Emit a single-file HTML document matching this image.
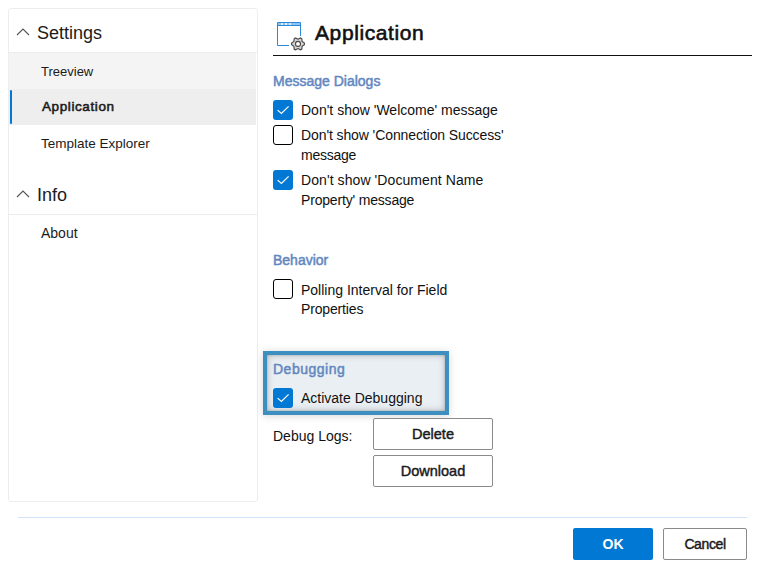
<!DOCTYPE html>
<html><head><meta charset="utf-8">
<style>
html,body{margin:0;padding:0;width:763px;height:567px;overflow:hidden;background:#fff;}
body{position:relative;font-family:"Liberation Sans",sans-serif;color:#1b1b1b;}
.a{position:absolute;white-space:nowrap;line-height:20px;}
#side{position:absolute;left:8px;top:8px;width:248px;height:492px;border:1px solid #ededed;border-radius:3px;}
.hdr{font-size:18px;color:#1b1b1b;}
.itm{font-size:13.5px;color:#1b1b1b;}
.sec{font-size:14px;color:#6287bf;-webkit-text-stroke:0.5px #6287bf;}
.lbl{font-size:14px;color:#111;}
.cb{position:absolute;left:273px;width:20px;height:20px;box-sizing:border-box;border-radius:3px;}
.cb.on{background:#0078d4;}
.cb.off{border:1px solid #000;background:#fff;}
.btn{position:absolute;box-sizing:border-box;border:1px solid #8a8a8a;border-radius:2px;background:#fff;}
.bt{font-size:14.5px;color:#1b1b1b;-webkit-text-stroke:0.45px #1b1b1b;}
</style></head><body>

<div id="side"></div>
<!-- settings header -->
<div style="position:absolute;left:9px;top:52px;width:248px;height:1px;background:#ececec"></div>
<div style="position:absolute;left:9px;top:53px;width:247px;height:36px;background:#f4f4f4"></div>
<div style="position:absolute;left:9px;top:89px;width:247px;height:36px;background:#eeeeee"></div>
<div style="position:absolute;left:10px;top:90px;width:2px;height:34px;background:#0078d4;border-radius:1px"></div>
<div style="position:absolute;left:9px;top:214px;width:248px;height:1px;background:#ececec"></div>

<svg style="position:absolute;left:0;top:0" width="40" height="220">
 <polyline points="17,35 23,29 29,35" fill="none" stroke="#575757" stroke-width="1.15"/>
 <polyline points="17,197 23,191 29,197" fill="none" stroke="#575757" stroke-width="1.15"/>
</svg>
<div class="a hdr" style="left:37px;top:23px">Settings</div>
<div class="a itm" style="left:41px;top:62px;font-size:13px">Treeview</div>
<div class="a itm" style="left:42px;top:97px;-webkit-text-stroke:0.55px #1b1b1b;letter-spacing:0.6px">Application</div>
<div class="a itm" style="left:41px;top:134px">Template Explorer</div>
<div class="a hdr" style="left:37px;top:185px">Info</div>
<div class="a itm" style="left:41px;top:223px;font-size:14px">About</div>

<!-- right header -->
<svg style="position:absolute;left:270px;top:15px" width="40" height="40" viewBox="270 15 40 40">
 <rect x="277.5" y="22.5" width="23" height="3" fill="#8ec5f0"/>
 <circle cx="282" cy="24" r="0.9" fill="#fff"/>
 <circle cx="286" cy="24" r="0.9" fill="#fff"/>
 <circle cx="290" cy="24" r="0.9" fill="#fff"/>
 <polyline points="289,45.5 277.5,45.5 277.5,22.5 300.5,22.5 300.5,36" fill="none" stroke="#2b88d8" stroke-width="1"/>
 <line x1="277.5" y1="25.5" x2="300.5" y2="25.5" stroke="#2b88d8" stroke-width="1"/>
 <g transform="translate(298,43.9)">
  <polygon points="6.40,-0.79 6.40,0.79 4.07,2.35 3.88,5.15 2.52,5.94 0.00,4.70 -2.52,5.94 -3.88,5.15 -4.07,2.35 -6.40,0.79 -6.40,-0.79 -4.07,-2.35 -3.88,-5.15 -2.52,-5.94 -0.00,-4.70 2.52,-5.94 3.88,-5.15 4.07,-2.35" fill="#d4d4d4" stroke="#454545" stroke-width="1.1" stroke-linejoin="miter"/>
  <circle r="2.5" fill="#fff" stroke="#454545" stroke-width="1.1"/>
 </g>
</svg>
<div class="a" style="left:315px;top:23px;font-size:21px;color:#111;-webkit-text-stroke:0.6px #111;letter-spacing:0.6px">Application</div>
<div style="position:absolute;left:273px;top:55px;width:479px;height:1px;background:#111"></div>

<div class="a sec" style="left:273px;top:71px">Message Dialogs</div>
<div class="cb on" style="top:100px"><svg width="20" height="20"><polyline points="4.6,10.1 8.4,13.5 15.6,6.3" fill="none" stroke="#fff" stroke-width="1.2"/></svg></div>
<div class="a lbl" style="left:301px;top:100px">Don't show 'Welcome' message</div>
<div class="cb off" style="top:125px"></div>
<div class="a lbl" style="left:301px;top:125px"><span style="letter-spacing:-0.1px">Don't show 'Connection Success'</span><br><span style="letter-spacing:-0.25px">message</span></div>
<div class="cb on" style="top:170px"><svg width="20" height="20"><polyline points="4.6,10.1 8.4,13.5 15.6,6.3" fill="none" stroke="#fff" stroke-width="1.2"/></svg></div>
<div class="a lbl" style="left:301px;top:170px"><span style="letter-spacing:0.08px">Don't show 'Document Name</span><br><span style="letter-spacing:-0.18px">Property' message</span></div>

<div class="a sec" style="left:273px;top:250px">Behavior</div>
<div class="cb off" style="top:279px"></div>
<div class="a lbl" style="left:301px;top:281px;line-height:19px">Polling Interval for Field<br><span style="letter-spacing:-0.15px">Properties</span></div>

<!-- highlight -->
<div style="position:absolute;left:263px;top:351px;width:186px;height:64px;box-sizing:border-box;border:4px solid #3d8fc0;background:#eaeff3;box-shadow:inset 0 0 2px rgba(0,0,0,0.22),inset 0 0 7px rgba(0,0,0,0.25),0 1px 8px rgba(0,0,0,0.16)"></div>
<div class="a sec" style="left:273px;top:359px;letter-spacing:0.5px">Debugging</div>
<div class="cb on" style="top:388px"><svg width="20" height="20"><polyline points="4.6,10.1 8.4,13.5 15.6,6.3" fill="none" stroke="#fff" stroke-width="1.2"/></svg></div>
<div class="a lbl" style="left:301px;top:388px">Activate Debugging</div>

<div class="a lbl" style="left:273px;top:426px">Debug Logs:</div>
<div class="btn" style="left:373px;top:418px;width:120px;height:32px"></div>
<div class="a bt" style="left:373px;width:120px;text-align:center;top:424px">Delete</div>
<div class="btn" style="left:373px;top:455px;width:120px;height:32px"></div>
<div class="a bt" style="left:373px;width:120px;text-align:center;top:461px">Download</div>

<div style="position:absolute;left:18px;top:517px;width:729px;height:1px;background:#d3e2fa"></div>
<div style="position:absolute;left:573px;top:528px;width:80px;height:32px;background:#0078d4;border-radius:2px"></div>
<div class="a" style="left:573px;width:80px;text-align:center;top:534px;color:#fff;font-size:14px;font-weight:bold">OK</div>
<div class="btn" style="left:663px;top:528px;width:84px;height:32px"></div>
<div class="a bt" style="left:663px;width:84px;text-align:center;top:534px;font-size:14px;letter-spacing:-0.4px">Cancel</div>

</body></html>
